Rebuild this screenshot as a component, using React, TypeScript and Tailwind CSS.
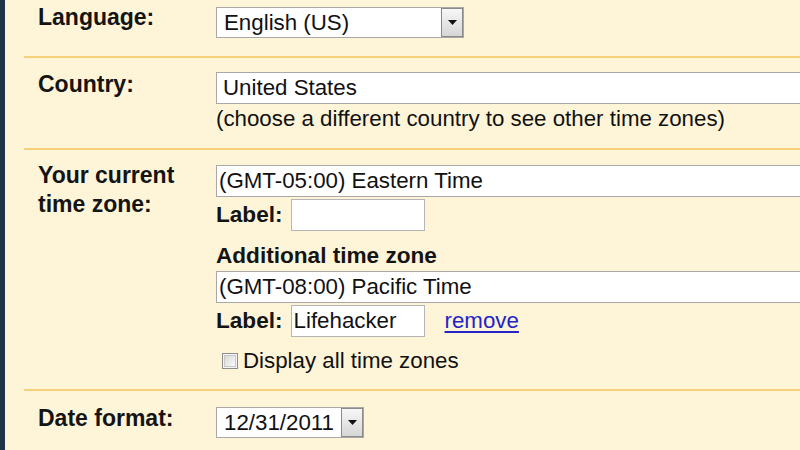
import React from "react";

const Arrow = () => (
  <div className="flex h-full w-[22px] shrink-0 items-center justify-center border border-[#8a8a8a] bg-gradient-to-b from-[#f7f7f7] to-[#d6d6d6]">
    <svg width="9" height="5" viewBox="0 0 9 5">
      <path d="M0 0 L9 0 L4.5 5 Z" fill="#111" />
    </svg>
  </div>
);

const Select = ({ text, w, pl, h, arrow }: { text: string; w: string; pl: string; h: string; arrow?: boolean }) => (
  <div className={`flex ${h} ${w} shrink-0 items-center border border-[#a8a8a8] bg-white`}>
    <div className={`flex-1 ${pl} leading-[28px] whitespace-nowrap text-[#111]`}>{text}</div>
    {arrow && <Arrow />}
  </div>
);

const Sep = () => <div className="h-[2px] w-full bg-[#f5d27a]" />;

const LabelCol = ({ children, pt }: { children: React.ReactNode; pt: string }) => (
  <div className={`w-[192px] shrink-0 pl-[14px] ${pt} text-[23px] font-bold leading-[29px] text-[#141414]`}>{children}</div>
);

const LabelInput = ({ value }: { value?: string }) => (
  <div className="flex h-[32px] items-center">
    <span className="text-[22.6px] font-bold leading-[28px] text-[#141414]">Label:</span>
    <div className="ml-[8px] flex h-full w-[134px] items-center border border-[#b5b5b5] bg-white pl-[2px] leading-[28px] text-[#111]">
      {value}
    </div>
  </div>
);

export default function App() {
  return (
    <div
      className="flex h-[450px] w-[800px] overflow-hidden border-l-[5px] border-[#1f3447] bg-[#fef5d9] text-[22.3px]"
      style={{ fontFamily: '"Liberation Sans", Arial, sans-serif' }}
    >
      <div className="ml-[19px] flex flex-1 flex-col">
        {/* Language */}
        <div className="flex pb-[18px]">
          <LabelCol pt="pt-[3px]">Language:</LabelCol>
          <div className="pt-[7px]">
            <Select text="English (US)" w="w-[248px]" pl="pl-[7px]" h="h-[31px]" arrow />
          </div>
        </div>
        <Sep />
        {/* Country */}
        <div className="flex pb-[15px]">
          <LabelCol pt="pt-[12px]">Country:</LabelCol>
          <div className="flex flex-col pt-[14px]">
            <Select text="United States" w="w-[640px]" pl="pl-[6px]" h="h-[32px]" />
            <div className="mt-[1px] whitespace-nowrap leading-[28px] text-[#111]">
              (choose a different country to see other time zones)
            </div>
          </div>
        </div>
        <Sep />
        {/* Time zone */}
        <div className="flex pb-[14px]">
          <LabelCol pt="pt-[11px]">
            Your current
            <br />
            time zone:
          </LabelCol>
          <div className="flex flex-col pt-[15px]">
            <Select text="(GMT-05:00) Eastern Time" w="w-[640px]" pl="pl-[2px]" h="h-[32px]" />
            <div className="mt-[2px]">
              <LabelInput />
            </div>
            <div className="mt-[11px] text-[22.6px] font-bold leading-[28px] text-[#141414]">Additional time zone</div>
            <div className="mt-[1px]">
              <Select text="(GMT-08:00) Pacific Time" w="w-[640px]" pl="pl-[2px]" h="h-[32px]" />
            </div>
            <div className="mt-[2px] flex items-center">
              <LabelInput value="Lifehacker" />
              <a className="ml-[20px] leading-[28px] text-[#2323c8] underline underline-offset-[3px]" href="#">
                remove
              </a>
            </div>
            <div className="mt-[10px] flex items-center leading-[28px]">
              <div className="ml-[6px] flex h-[16px] w-[16px] items-center justify-center border border-[#8e8e8e] bg-[#f4f4f4]">
                <div className="h-[12px] w-[12px] border border-[#c8c8c8] bg-gradient-to-br from-[#d9d9d9] to-[#fbfbfb]" />
              </div>
              <span className="ml-[5px] text-[#111]">Display all time zones</span>
            </div>
          </div>
        </div>
        <Sep />
        {/* Date format */}
        <div className="flex">
          <LabelCol pt="pt-[13px]">Date format:</LabelCol>
          <div className="pt-[16px]">
            <Select text="12/31/2011" w="w-[148px]" pl="pl-[7px]" h="h-[31px]" arrow />
          </div>
        </div>
      </div>
    </div>
  );
}
